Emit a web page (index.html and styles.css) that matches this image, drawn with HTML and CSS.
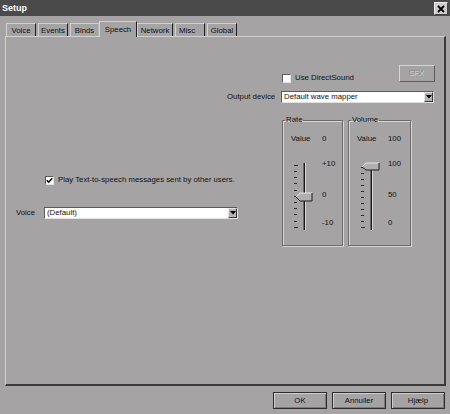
FILE: index.html
```html
<!DOCTYPE html>
<html>
<head>
<meta charset="utf-8">
<link rel="stylesheet" href="styles.css">
</head>
<body>
<div class="window">
  <div class="titlebar">
    <span class="title">Setup</span>
    <span class="close"><svg width="8" height="8" viewBox="0 0 8 8"><path d="M1 1 L7 7 M7 1 L1 7" stroke="#000" stroke-width="1.8"/></svg></span>
  </div>
  <div class="tabs">
    <span class="tab t-voice">Voice</span>
    <span class="tab t-events">Events</span>
    <span class="tab t-binds">Binds</span>
    <span class="tab t-speech active">Speech</span>
    <span class="tab t-network">Network</span>
    <span class="tab t-misc">Misc</span>
    <span class="tab t-global">Global</span>
  </div>
  <div class="panel">
    <div class="row-ds">
      <label class="check"><span class="box"></span><span>Use DirectSound</span></label>
      <button class="btn sfx" disabled>SFX</button>
    </div>
    <div class="row-out">
      <span class="lbl-out">Output device</span>
      <div class="combo combo-out">
        <span class="combo-text">Default wave mapper</span>
        <span class="drop"><svg width="6" height="4" viewBox="0 0 6 4"><path d="M0 0 H6 L3 3.5 Z" fill="#000"/></svg></span>
      </div>
    </div>
    <div class="main">
      <div class="left">
        <label class="check play"><span class="box checked"><svg width="7" height="7" viewBox="0 0 7 7"><path d="M0.8 3.2 L2.6 5.2 L6.2 1.2" stroke="#000" stroke-width="1.5" fill="none"/></svg></span><span>Play Text-to-speech messages sent by other users.</span></label>
        <div class="row-voice">
          <span class="lbl-voice">Voice</span>
          <div class="combo combo-voice">
            <span class="combo-text">(Default)</span>
            <span class="drop"><svg width="6" height="4" viewBox="0 0 6 4"><path d="M0 0 H6 L3 3.5 Z" fill="#000"/></svg></span>
          </div>
        </div>
      </div>
      <div class="groups">
        <fieldset class="group">
          <legend>Rate</legend>
          <div class="grp-grid">
            <span class="vlabel">Value</span><span class="vnum">0</span>
            <svg class="slider" width="26" height="76" viewBox="0 0 26 76">
              <g fill="#2a2a2a">
                <rect x="3" y="7" width="4" height="1"/>
                <rect x="3" y="13" width="3" height="1"/>
                <rect x="3" y="19" width="3" height="1"/>
                <rect x="3" y="25" width="3" height="1"/>
                <rect x="3" y="32" width="3" height="1"/>
                <rect x="3" y="38" width="3" height="1"/>
                <rect x="3" y="44" width="3" height="1"/>
                <rect x="3" y="50" width="3" height="1"/>
                <rect x="3" y="56" width="3" height="1"/>
                <rect x="3" y="63" width="3" height="1"/>
                <rect x="3" y="69" width="4" height="1"/>
              </g>
              <rect x="12" y="5" width="1" height="67" fill="#6a6a6a"/>
              <rect x="13" y="5" width="1" height="67" fill="#1a1a1a"/>
              <rect x="14" y="5" width="1" height="67" fill="#d6d6d6"/>
              <polygon points="5,39 9,35 21,35 21,43 9,43" fill="#b1afb0"/>
              <polyline points="5,39 9,35 21,35" fill="none" stroke="#e6e6e6" stroke-width="1"/>
              <polyline points="21,35 21,43 9,43 5,39" fill="none" stroke="#1e1e1e" stroke-width="1"/>
            </svg>
            <div class="scale">
              <span class="s1">+10</span>
              <span class="s2">0</span>
              <span class="s3">-10</span>
            </div>
          </div>
        </fieldset>
        <fieldset class="group">
          <legend>Volume</legend>
          <div class="grp-grid">
            <span class="vlabel">Value</span><span class="vnum">100</span>
            <svg class="slider" width="26" height="76" viewBox="0 0 26 76">
              <g fill="#2a2a2a">
                <rect x="4" y="9" width="4" height="1"/>
                <rect x="4" y="15" width="3" height="1"/>
                <rect x="4" y="21" width="3" height="1"/>
                <rect x="4" y="27" width="3" height="1"/>
                <rect x="4" y="33" width="3" height="1"/>
                <rect x="4" y="39" width="3" height="1"/>
                <rect x="4" y="45" width="3" height="1"/>
                <rect x="4" y="51" width="3" height="1"/>
                <rect x="4" y="57" width="3" height="1"/>
                <rect x="4" y="63" width="3" height="1"/>
                <rect x="4" y="69" width="4" height="1"/>
              </g>
              <rect x="13" y="5" width="1" height="67" fill="#6a6a6a"/>
              <rect x="14" y="5" width="1" height="67" fill="#1a1a1a"/>
              <rect x="15" y="5" width="1" height="67" fill="#d6d6d6"/>
              <polygon points="5,9 9,5 22,5 22,12 9,12" fill="#b1afb0"/>
              <polyline points="5,9 9,5 22,5" fill="none" stroke="#e6e6e6" stroke-width="1"/>
              <polyline points="22,5 22,12 9,12 5,9" fill="none" stroke="#1e1e1e" stroke-width="1"/>
            </svg>
            <div class="scale">
              <span class="s1">100</span>
              <span class="s2">50</span>
              <span class="s3">0</span>
            </div>
          </div>
        </fieldset>
      </div>
    </div>
  </div>
  <div class="footer">
    <button class="btn dlg">OK</button>
    <button class="btn dlg">Annuller</button>
    <button class="btn dlg">Hjælp</button>
  </div>
</div>
</body>
</html>
```

FILE: styles.css
```css
* { box-sizing: border-box; }
html, body {
  margin: 0;
  padding: 0;
}
body {
  width: 450px;
  height: 414px;
  overflow: hidden;
  background: #a5a3a4;
  font-family: "Liberation Sans", Arial, sans-serif;
  font-size: 7.8px;
  line-height: 10px;
  color: #111;
}
.window {
  width: 450px;
  height: 414px;
  display: flex;
  flex-direction: column;
}
.titlebar {
  height: 16px;
  background: #4b4a4a;
  display: flex;
  align-items: center;
  justify-content: space-between;
  padding: 0 2px 0 2px;
}
.title {
  color: #fff;
  font-weight: bold;
  font-size: 9px;
}
.close {
  width: 14px;
  height: 13px;
  margin-top: 1px;
  background: #cfcdce;
  border-top: 1px solid #eee;
  border-left: 1px solid #eee;
  border-right: 1px solid #444;
  border-bottom: 1px solid #444;
  display: flex;
  align-items: center;
  justify-content: center;
}
.tabs {
  height: 20px;
  display: flex;
  align-items: flex-end;
  padding-left: 6px;
  position: relative;
  z-index: 2;
}
.tab {
  height: 13px;
  border-top: 1px solid #d2d0d1;
  border-left: 1px solid #d2d0d1;
  border-right: 1px solid #1e1e1e;
  text-align: center;
  line-height: 10px;
  padding-top: 2px;
  margin-right: 2px;
  white-space: nowrap;
}
.t-voice { width: 30px; }
.t-events { width: 30px; }
.t-binds { width: 29px; border-right-color: #b8b6b7; margin-right: 0; }
.t-speech { width: 38px; }
.t-network { width: 36px; }
.t-misc { width: 30px; text-align: left; padding-left: 3px; }
.t-global { width: 30px; }
.tab.active {
  height: 16px;
  margin-bottom: -1px;
  background: #a5a3a4;
  margin-right: 0;
  padding-top: 3px;
}
.panel {
  margin-left: 5px;
  width: 441px;
  height: 350px;
  border-top: 1px solid #d2d0d1;
  border-left: 1px solid #d2d0d1;
  border-right: 2px solid #3c3b3b;
  border-bottom: 2px solid #3c3b3b;
  display: flex;
  flex-direction: column;
}
.row-ds {
  margin-top: 28px;
  height: 17px;
  display: flex;
  align-items: flex-end;
  padding-left: 276px;
  padding-right: 9px;
}
.check {
  display: flex;
  align-items: center;
  gap: 4px;
  white-space: nowrap;
}
.row-ds .check { margin-bottom: -1px; }
.box {
  width: 9px;
  height: 9px;
  background: #fff;
  border-top: 1px solid #5a5a5a;
  border-left: 1px solid #5a5a5a;
  border-right: 1px solid #e2e2e2;
  border-bottom: 1px solid #e2e2e2;
  display: flex;
  align-items: center;
  justify-content: center;
}
.box svg { display: block; }
.btn {
  font-family: "Liberation Sans", Arial, sans-serif;
  font-size: 7.8px;
  line-height: 10px;
  padding: 0;
  background: #a5a3a4;
  color: #111;
}
.sfx {
  margin-left: auto;
  width: 36px;
  height: 17px;
  border-top: 1px solid #d6d4d5;
  border-left: 1px solid #d6d4d5;
  border-right: 1px solid #5e5d5d;
  border-bottom: 1px solid #5e5d5d;
  color: #cfcdce;
  text-shadow: -1px -1px 0 #8a8889;
}
.row-out {
  margin-top: 9px;
  display: flex;
  align-items: center;
  padding-left: 221px;
}
.lbl-out { width: 54px; }
.combo {
  height: 12px;
  background: #fff;
  border-top: 1px solid #5a5a5a;
  border-left: 1px solid #5a5a5a;
  border-right: 1px solid #e2e2e2;
  border-bottom: 1px solid #e2e2e2;
  display: flex;
  align-items: center;
  justify-content: space-between;
}
.combo-out { width: 153px; }
.combo-voice { width: 194px; }
.combo-text {
  padding-left: 2px;
  white-space: nowrap;
}
.drop {
  width: 9px;
  height: 10px;
  background: #b4b2b3;
  border-top: 1px solid #e6e6e6;
  border-left: 1px solid #e6e6e6;
  border-right: 1px solid #3a3a3a;
  border-bottom: 1px solid #3a3a3a;
  display: flex;
  align-items: center;
  justify-content: center;
}
.drop svg { display: block; }
.main {
  margin-top: 12px;
  display: flex;
}
.left {
  width: 276px;
  padding-top: 60px;
}
.play { margin-left: 39px; }
.row-voice {
  margin-top: 22px;
  display: flex;
  align-items: center;
  padding-left: 10px;
}
.lbl-voice { width: 28px; }
.groups {
  display: flex;
  gap: 5px;
}
.group {
  margin: 0;
  padding: 0;
  min-width: 0;
  width: 61px;
  height: 131px;
  border: 1px solid #6e6c6d;
  box-shadow: 1px 1px 0 #d6d4d5, inset 1px 1px 0 #d6d4d5;
}
.group + .group { width: 63px; }
.group legend {
  padding: 0 1px;
  margin-left: 2px;
  line-height: 10px;
}
.grp-grid {
  display: grid;
  grid-template-columns: 31px auto;
  padding-left: 8px;
  margin-top: 9px;
}
.slider {
  display: block;
  margin-top: 14px;
}
.scale {
  margin-top: 15px;
  display: flex;
  flex-direction: column;
}
.scale .s2 { margin-top: 21px; }
.scale .s3 { margin-top: 18px; }
.footer {
  margin-top: 6px;
  display: flex;
  justify-content: flex-end;
  gap: 5px;
  padding-right: 5px;
}
.dlg {
  width: 54px;
  height: 17px;
  border: 1px solid #2e2d2d;
  box-shadow: inset 1px 1px 0 #d0cecf, inset -1px -1px 0 #7c7a7b;
}
```
